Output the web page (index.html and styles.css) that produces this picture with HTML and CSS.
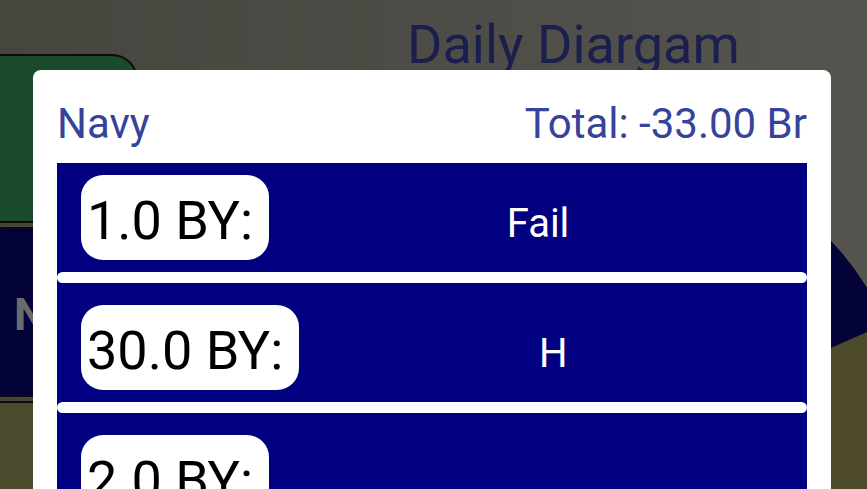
FILE: index.html
```html
<!DOCTYPE html>
<html lang="en">
<head>
<meta charset="utf-8">
<title>Daily Diargam</title>
<link rel="stylesheet" href="styles.css">
</head>
<body>
<div class="app">
  <div class="side">
    <div class="side-btn green"></div>
    <div class="side-btn navy"><span class="side-label">N</span></div>
    <div class="side-btn olive"></div>
  </div>
  <div class="main">
    <h1 class="title">Daily Diargam</h1>
  </div>
  <svg class="pie" width="867" height="489" viewBox="0 0 867 489">
    <circle cx="615" cy="443" r="296" fill="#4c4a2b"/>
    <path d="M615 443 L885.8 323.7 A296 296 0 0 0 615 147 Z" fill="#03033a"/>
  </svg>
  <div class="dialog">
    <div class="dialog-head">
      <span>Navy</span>
      <span>Total: -33.00 Br</span>
    </div>
    <div class="list">
      <div class="list-inner">
        <div class="row">
          <div class="pill">1.0 BY:</div>
          <div class="value">Fail</div>
        </div>
        <div class="divider"></div>
        <div class="row">
          <div class="pill">30.0 BY:</div>
          <div class="value">H</div>
        </div>
        <div class="divider"></div>
        <div class="row">
          <div class="pill">2.0 BY:</div>
          <div class="value"></div>
        </div>
      </div>
    </div>
  </div>
</div>
</body>
</html>
```
FILE: styles.css
```css
* { box-sizing: border-box; }
html, body { margin: 0; padding: 0; }
body {
  width: 867px;
  height: 489px;
  overflow: hidden;
  font-family: Roboto, "Noto Sans", sans-serif;
}
.app {
  position: relative;
  width: 867px;
  height: 489px;
  overflow: hidden;
  display: flex;
  background: linear-gradient(90deg, #46463f 0%, #4d4c46 50%, #55544e 100%);
}
.side {
  width: 138px;
  flex: none;
  display: flex;
  flex-direction: column;
  gap: 4px;
  padding-top: 54px;
}
.side-btn {
  border: 2px solid #0c0c0a;
  border-left: none;
  border-radius: 0 26px 26px 0;
  flex: none;
}
.green { height: 169px; background: #1a4b2b; }
.navy {
  height: 170px;
  background: #03033a;
  padding: 60px 0 0 14px;
}
.side-label {
  font-size: 45px;
  font-weight: 700;
  color: #6b6b6e;
  line-height: 52px;
}
.olive { height: 120px; background: #4c4a2c; }
.main {
  flex: 1;
  padding: 13px 0 0 269px;
}
.title {
  margin: 0;
  font-size: 54px;
  font-weight: 400;
  line-height: 63px;
  color: #1b1f4d;
  white-space: nowrap;
}
.pie {
  position: absolute;
  left: 0;
  top: 0;
}
.dialog {
  position: absolute;
  left: 33px;
  top: 70px;
  width: 798px;
  height: 440px;
  background: #ffffff;
  border-radius: 8px 8px 0 0;
  padding: 29px 24px 0;
  display: flex;
  flex-direction: column;
}
.dialog-head {
  display: flex;
  justify-content: space-between;
  font-size: 42px;
  line-height: 49px;
  color: #35439b;
  margin-bottom: 15px;
}
.list {
  flex: 1;
  background: #000080;
  overflow: hidden;
}
.list-inner { margin-top: -10px; }
.row {
  display: flex;
  align-items: center;
  padding: 22px 0 12px 24px;
}
.pill {
  height: 85px;
  background: #ffffff;
  border-radius: 22px;
  padding: 5px 16px 0 6px;
  display: flex;
  align-items: center;
  font-size: 54px;
  color: #000000;
  white-space: nowrap;
}
.value {
  flex: 1;
  text-align: center;
  color: #ffffff;
  font-size: 40px;
  padding-top: 12px;
}
.divider {
  height: 11px;
  background: #ffffff;
  border-radius: 6px;
}
```
